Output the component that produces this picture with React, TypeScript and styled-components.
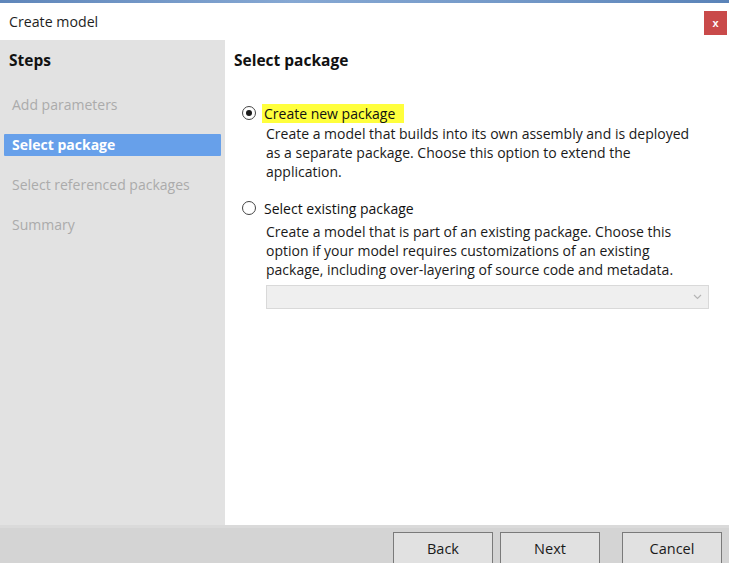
import React from "react";
import styled, { createGlobalStyle } from "styled-components";

const Global = createGlobalStyle`
  html, body { margin: 0; padding: 0; background: #ffffff; }
  body { font-family: "Open Sans", "Noto Sans", sans-serif; }
  * { box-sizing: border-box; }
`;

const Window = styled.div`
  width: 729px;
  height: 563px;
  display: flex;
  flex-direction: column;
  overflow: hidden;
  background: #ffffff;
`;

const BackStrip = styled.div`
  height: 3px;
  flex: none;
  background: linear-gradient(90deg, #5f86ba 0%, #86a8d3 40%, #7499c8 70%, #5a83b8 100%);
`;

const TitleBar = styled.div`
  height: 37px;
  flex: none;
  display: flex;
  align-items: center;
  justify-content: space-between;
  padding: 0 2px 0 9px;
  background: #ffffff;
`;

const Title = styled.span`
  font-size: 14.2px;
  color: #1e1e1e;
`;

const CloseButton = styled.div`
  width: 23px;
  height: 24px;
  background: #c94a4a;
  color: #ffffff;
  font-size: 11px;
  font-weight: 700;
  display: flex;
  align-items: center;
  justify-content: center;
  font-family: "Liberation Sans", sans-serif;
  margin-top: 3px;
`;

const Body = styled.div`
  flex: 1;
  display: flex;
  min-height: 0;
  border-bottom: 3px solid #dadada;
`;

const Sidebar = styled.div`
  width: 225px;
  flex: none;
  background: #e2e2e2;
  padding: 9px 4px 0 4px;
  display: flex;
  flex-direction: column;
`;

const SectionTitle = styled.div<{ $indent: number; $after: number }>`
  font-size: 15.5px;
  font-weight: 700;
  color: #111111;
  padding-left: ${(p) => p.$indent}px;
  height: 22px;
  line-height: 22px;
  margin-bottom: ${(p) => p.$after}px;
`;

const StepItem = styled.div<{ $active?: boolean }>`
  height: 22px;
  line-height: 22px;
  margin-bottom: 18px;
  padding-left: 8px;
  font-size: 14px;
  border-radius: 1px;
  color: ${(p) => (p.$active ? "#ffffff" : "#ababab")};
  font-weight: ${(p) => (p.$active ? 700 : 400)};
  background: ${(p) => (p.$active ? "#67a0ea" : "transparent")};
`;

const Content = styled.div`
  flex: 1;
  background: #ffffff;
  padding: 9px 20px 0 9px;
  display: flex;
  flex-direction: column;
  border-right: 1px solid #ececec;
`;

const Option = styled.div<{ $gap: number }>`
  display: flex;
  flex-direction: column;
  margin-top: ${(p) => p.$gap}px;
  padding-left: 8px;
`;

const OptionHead = styled.div`
  display: flex;
  align-items: center;
  gap: 8px;
  height: 22px;
`;

const Radio = styled.span<{ $checked?: boolean }>`
  width: 14px;
  height: 14px;
  border-radius: 50%;
  border: 1px solid #444444;
  background: #ffffff;
  display: flex;
  align-items: center;
  justify-content: center;
  flex: none;
  &::after {
    content: "";
    width: 6px;
    height: 6px;
    border-radius: 50%;
    background: ${(p) => (p.$checked ? "#1a1a1a" : "transparent")};
  }
`;

const Label = styled.span<{ $mark?: boolean }>`
  font-size: 14px;
  color: #111111;
  background: ${(p) => (p.$mark ? "#ffff3c" : "transparent")};
  padding: 0 9px 0 2px;
  margin-left: -2px;
  line-height: 19px;
`;

const Description = styled.div<{ $top: number }>`
  font-size: 14px;
  line-height: 19px;
  color: #1a1a1a;
  padding-left: 24px;
  margin-top: ${(p) => p.$top}px;
  width: 458px;
`;

const Select = styled.div`
  margin: 6px 0 0 24px;
  height: 24px;
  width: 443px;
  background: #efefef;
  border: 1px solid #d9d9d9;
  display: flex;
  align-items: center;
  justify-content: flex-end;
  padding-right: 6px;
`;

const Footer = styled.div`
  height: 35px;
  flex: none;
  background: #d4d4d4;
  display: flex;
  align-items: flex-start;
  padding: 4px 0 0 393px;
`;

const Button = styled.div<{ $gap: number }>`
  width: 100px;
  height: 34px;
  margin-left: ${(p) => p.$gap}px;
  border: 1px solid #7a7a7a;
  background: #e1e1e1;
  font-size: 14.5px;
  color: #1a1a1a;
  display: flex;
  justify-content: center;
  padding-top: 6px;
`;

export default function App() {
  return (
    <Window>
      <Global />
      <BackStrip />
      <TitleBar>
        <Title>Create model</Title>
        <CloseButton>x</CloseButton>
      </TitleBar>
      <Body>
        <Sidebar>
          <SectionTitle $indent={5} $after={23}>Steps</SectionTitle>
          <StepItem>Add parameters</StepItem>
          <StepItem $active>Select package</StepItem>
          <StepItem>Select referenced packages</StepItem>
          <StepItem>Summary</StepItem>
        </Sidebar>
        <Content>
          <SectionTitle $indent={0} $after={31}>Select package</SectionTitle>
          <Option $gap={0}>
            <OptionHead>
              <Radio $checked />
              <Label $mark>Create new package</Label>
            </OptionHead>
            <Description $top={0}>
              Create a model that builds into its own assembly and is deployed as a separate package.
              Choose this option to extend the application.
            </Description>
          </Option>
          <Option $gap={16}>
            <OptionHead>
              <Radio />
              <Label>Select existing package</Label>
            </OptionHead>
            <Description $top={3}>
              Create a model that is part of an existing package. Choose this option if your model
              requires customizations of an existing package, including over-layering of source code
              and metadata.
            </Description>
            <Select>
              <svg width="9" height="6" viewBox="0 0 9 6">
                <path d="M1 1 L4.5 4.5 L8 1" fill="none" stroke="#b5b5b5" strokeWidth="1.2" />
              </svg>
            </Select>
          </Option>
        </Content>
      </Body>
      <Footer>
        <Button $gap={0}>Back</Button>
        <Button $gap={7}>Next</Button>
        <Button $gap={22}>Cancel</Button>
      </Footer>
    </Window>
  );
}
